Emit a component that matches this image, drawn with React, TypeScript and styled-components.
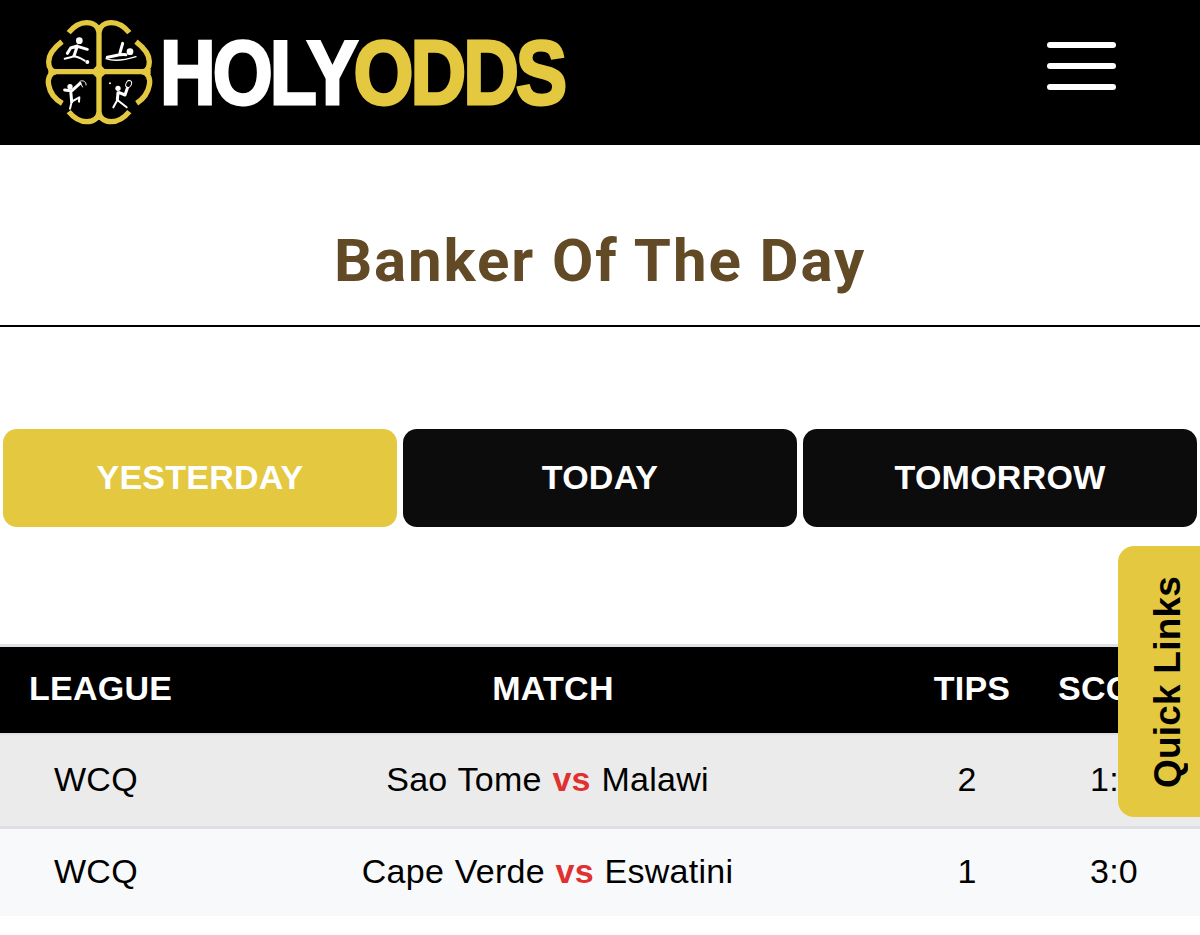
import * as React from "react";
import styled, { createGlobalStyle } from "styled-components";

const GOLD = "#e3c840";

const matches = [
  { league: "WCQ", home: "Sao Tome", away: "Malawi", tip: "2", score: "1:0" },
  { league: "WCQ", home: "Cape Verde", away: "Eswatini", tip: "1", score: "3:0" },
];

const Logo = (): JSX.Element => (
  <LogoSvg viewBox="0 0 372 345" aria-hidden="true">
    <g fill="none" stroke={GOLD} strokeWidth="16" strokeLinecap="butt">
      <path d="M207 15V300M55 155H362" />
      <path d="M116 38C134 16 150 8 170 8C190 8 204 18 207 36" />
      <path d="M298 38C280 16 264 8 244 8C224 8 210 18 207 36" />
      <path d="M96 65C70 85 56 105 56 125C56 142 64 155 78 155" />
      <path d="M318 65C344 85 358 105 358 125C358 142 350 155 336 155" />
      <path d="M78 155C60 158 52 175 56 195C60 220 76 238 97 250" />
      <path d="M336 155C354 158 362 175 358 195C354 220 338 238 320 250" />
      <path d="M116 275C134 297 150 305 170 305C190 305 204 295 207 278" />
      <path d="M298 275C280 297 264 305 244 305C224 305 210 295 207 278" />
    </g>
    <path d="M207 130L232 155L207 180L182 155Z" fill={GOLD} />
    <g fill="#fff" stroke="none">
      <circle cx="148" cy="62" r="10" />
      <circle cx="172" cy="126" r="6" />
      <circle cx="300" cy="95" r="10" />
      <circle cx="120" cy="200" r="8" />
      <circle cx="264" cy="205" r="8" />
      <circle cx="240" cy="190" r="3" />
    </g>
    <g fill="none" stroke="#fff" strokeWidth="6" strokeLinecap="round" strokeLinejoin="round">
      <path d="M142 78L132 108M142 78L122 84L112 100M145 80L172 88" strokeWidth="9" />
      <path d="M132 108L122 112L104 116M132 108L150 114L164 122" />
      <path d="M232 112C255 108 270 102 288 104M270 98L278 70" strokeWidth="9" />
      <path d="M228 116C250 124 280 122 318 110" strokeWidth="4" />
      <path d="M122 212L125 245M122 212L104 210M126 212L150 190" strokeWidth="9" />
      <path d="M125 245L120 266M125 245L148 232L147 245" />
      <path d="M264 218L262 240M268 218L285 225L292 205" strokeWidth="9" />
      <path d="M262 240L250 262M262 240L290 262" />
    </g>
    <g fill="none" stroke="#fff" strokeWidth="3">
      <path d="M148 186C155 178 170 184 168 196M152 190L158 202" />
      <ellipse cx="296" cy="192" rx="8" ry="11" transform="rotate(25 296 192)" />
    </g>
  </LogoSvg>
);

export default function App(): JSX.Element {
  return (
    <>
      <GlobalStyle />
      <Page>
        <TopBar>
          <Brand>
            <Logo />
            <Wordmark>
              HOLY<Gold>ODDS</Gold>
            </Wordmark>
          </Brand>
          <Burger aria-label="Menu">
            <BurgerLine />
            <BurgerLine />
            <BurgerLine />
          </Burger>
        </TopBar>

        <TitleBlock>
          <Title>Banker Of The Day</Title>
        </TitleBlock>

        <Tabs>
          <Tab $active>YESTERDAY</Tab>
          <Tab>TODAY</Tab>
          <Tab>TOMORROW</Tab>
        </Tabs>

        <Table>
          <HeadRow>
            <HeadCell $align="left">LEAGUE</HeadCell>
            <HeadCell>MATCH</HeadCell>
            <HeadCell>TIPS</HeadCell>
            <HeadCell>SCORE</HeadCell>
          </HeadRow>
          {matches.map((m, i) => (
            <Row key={m.home} $striped={i % 2 === 0} $tall={i === 0}>
              <LeagueCell>{m.league}</LeagueCell>
              <MatchCell>
                <span>
                  {m.home} <Vs>vs</Vs> {m.away}
                </span>
              </MatchCell>
              <TipCell>{m.tip}</TipCell>
              <Cell>{m.score}</Cell>
            </Row>
          ))}
        </Table>

        <QuickLinks>
          <QuickLinksLabel>Quick Links</QuickLinksLabel>
        </QuickLinks>
      </Page>
    </>
  );
}

const GlobalStyle = createGlobalStyle`
  html, body {
    margin: 0;
    padding: 0;
    background: #fff;
    overflow: hidden;
  }
  * {
    box-sizing: border-box;
  }
`;

const Page = styled.div`
  position: relative;
  width: 1200px;
  height: 935px;
  overflow: hidden;
  background: #fff;
  font-family: "Liberation Sans", Arial, sans-serif;
  color: #000;
`;

const TopBar = styled.header`
  height: 145px;
  background: #000;
  display: flex;
  align-items: center;
  justify-content: space-between;
  padding: 0 84px 0 30px;
`;

const Brand = styled.div`
  display: flex;
  align-items: center;
  gap: 8px;
`;

const LogoSvg = styled.svg`
  width: 124px;
  height: 115px;
  flex-shrink: 0;
  margin-top: 10px;
`;

const Wordmark = styled.div`
  font-size: 90px;
  font-weight: 700;
  line-height: 1;
  letter-spacing: -3.5px;
  color: #fff;
  -webkit-text-stroke: 3px currentColor;
  transform: scaleX(0.857);
  transform-origin: left center;
  white-space: nowrap;
  margin-left: -2px;
`;

const Gold = styled.span`
  color: ${GOLD};
  margin-left: -2px;
`;

const Burger = styled.div`
  width: 69px;
  display: flex;
  flex-direction: column;
  gap: 15px;
  margin-bottom: 14px;
`;

const BurgerLine = styled.span`
  display: block;
  height: 6px;
  background: #fff;
  border-radius: 3px;
`;

const TitleBlock = styled.div`
  height: 182px;
  padding-top: 52px;
  border-bottom: 2px solid #000;
  display: flex;
  align-items: center;
  justify-content: center;
`;

const Title = styled.h1`
  margin: 0;
  font-family: Roboto, sans-serif;
  font-size: 60px;
  font-weight: 700;
  color: #624a26;
  letter-spacing: 1.9px;
  line-height: 1;
`;

const Tabs = styled.nav`
  display: grid;
  grid-template-columns: repeat(3, 1fr);
  gap: 6px;
  padding: 102px 3px 0;
`;

const Tab = styled.div<{ $active?: boolean }>`
  height: 98px;
  padding-bottom: 2px;
  border-radius: 14px;
  background: ${p => (p.$active ? GOLD : "#0c0c0c")};
  color: #fff;
  font-size: 34px;
  letter-spacing: 0.25px;
  font-weight: 700;
  display: flex;
  align-items: center;
  justify-content: center;
`;

const Table = styled.div`
  margin-top: 117px;
  border-top: 3px solid #dee2e6;
  letter-spacing: 0.25px;
`;

const columns = "184px 738px 100px 272px";

const HeadRow = styled.div`
  display: grid;
  grid-template-columns: ${columns};
  height: 86px;
  padding-bottom: 4px;
  background: #000;
  color: #fff;
`;

const HeadCell = styled.div<{ $align?: string }>`
  display: flex;
  align-items: center;
  justify-content: ${p => (p.$align === "left" ? "flex-start" : "center")};
  padding-left: ${p => (p.$align === "left" ? "29px" : "0")};
  font-size: 34px;
  font-weight: 700;
  white-space: nowrap;
  &:last-child {
    justify-content: flex-start;
    padding-left: 36px;
  }
`;

const Row = styled.div<{ $striped: boolean; $tall: boolean }>`
  display: grid;
  grid-template-columns: ${columns};
  height: ${p => (p.$tall ? "96px" : "87px")};
  padding-bottom: 2px;
  background: ${p => (p.$striped ? "#ebebeb" : "#f8f9fa")};
  border-top: ${p => (p.$tall ? "2px solid #e0e0e6" : "none")};
  border-bottom: ${p => (p.$tall ? "3px solid #dedee6" : "none")};
  font-size: 34px;
`;

const Cell = styled.div`
  display: flex;
  align-items: center;
  justify-content: center;
  white-space: pre;
  &:last-child {
    justify-content: flex-start;
    padding-left: 68px;
  }
`;

const LeagueCell = styled(Cell)`
  justify-content: flex-start;
  padding-left: 54px;
`;

const MatchCell = styled(Cell)`
  padding-right: 11px;
  word-spacing: 1px;
`;

const TipCell = styled(Cell)`
  padding-right: 10px;
`;

const Vs = styled.span`
  color: #e0302f;
  font-weight: 700;
`;

const QuickLinks = styled.aside`
  position: absolute;
  top: 546px;
  right: 0;
  width: 82px;
  height: 271px;
  padding-left: 18px;
  background: ${GOLD};
  border-radius: 16px 0 0 16px;
  display: flex;
  align-items: center;
  justify-content: center;
`;

const QuickLinksLabel = styled.span`
  writing-mode: vertical-rl;
  transform: rotate(180deg);
  font-size: 37px;
  letter-spacing: 0.2px;
  font-weight: 700;
  color: #000;
  white-space: nowrap;
`;
